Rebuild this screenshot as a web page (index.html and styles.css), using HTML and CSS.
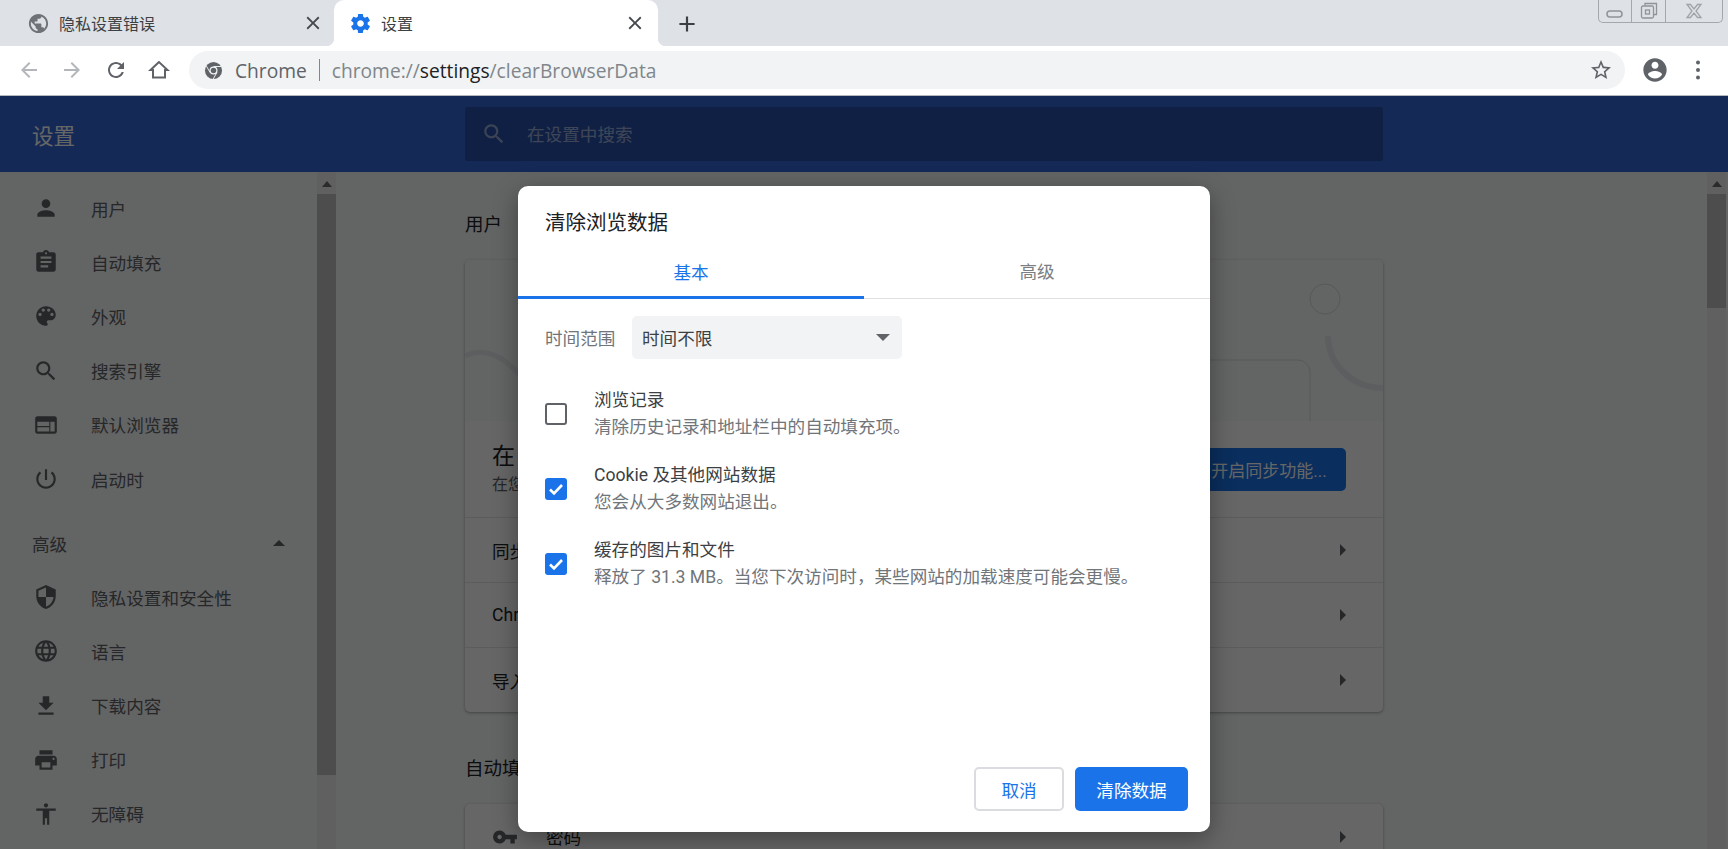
FILE: index.html
```html
<!DOCTYPE html>
<html lang="zh-CN">
<head>
<meta charset="utf-8">
<title>设置</title>
<link rel="stylesheet" href="styles.css">
</head>
<body>
<div class="tabstrip">
  <div class="tab">
    <svg class="tab-ico grey" viewBox="0 0 24 24"><path d="M12 2C6.48 2 2 6.48 2 12s4.48 10 10 10 10-4.48 10-10S17.52 2 12 2zm-1 17.93c-3.95-.49-7-3.85-7-7.93 0-.62.08-1.21.21-1.79L9 15v1c0 1.1.9 2 2 2v1.93zm6.9-2.54c-.26-.81-1-1.39-1.9-1.39h-1v-3c0-.55-.45-1-1-1H8v-2h2c.55 0 1-.45 1-1V7h2c1.1 0 2-.9 2-2v-.41c2.93 1.19 5 4.06 5 7.41 0 2.08-.8 3.97-2.1 5.39z"/></svg>
    <span class="tab-title">隐私设置错误</span>
    <svg class="tab-close" viewBox="0 0 24 24"><path d="M19 6.41L17.59 5 12 10.59 6.41 5 5 6.41 10.59 12 5 17.59 6.41 19 12 13.41 17.59 19 19 17.59 13.41 12z"/></svg>
  </div>
  <div class="tab tab-active">
    <svg class="tab-ico blue" viewBox="0 0 24 24"><path d="M19.43 12.98c.04-.32.07-.64.07-.98s-.03-.66-.07-.98l2.11-1.65c.19-.15.24-.42.12-.64l-2-3.46c-.12-.22-.39-.3-.61-.22l-2.49 1c-.52-.4-1.08-.73-1.69-.98l-.38-2.65C14.46 2.18 14.25 2 14 2h-4c-.25 0-.46.18-.49.42l-.38 2.65c-.61.25-1.17.59-1.69.98l-2.49-1c-.23-.09-.49 0-.61.22l-2 3.46c-.13.22-.07.49.12.64l2.11 1.65c-.04.32-.07.65-.07.98s.03.66.07.98l-2.11 1.65c-.19.15-.24.42-.12.64l2 3.46c.12.22.39.3.61.22l2.49-1c.52.4 1.08.73 1.69.98l.38 2.65c.03.24.24.42.49.42h4c.25 0 .46-.18.49-.42l.38-2.65c.61-.25 1.17-.59 1.69-.98l2.49 1c.23.09.49 0 .61-.22l2-3.46c.12-.22.07-.49-.12-.64l-2.11-1.65zM12 15.5c-1.93 0-3.5-1.57-3.5-3.5s1.57-3.5 3.5-3.5 3.5 1.57 3.5 3.5-1.57 3.5-3.5 3.5z"/></svg>
    <span class="tab-title">设置</span>
    <svg class="tab-close" viewBox="0 0 24 24"><path d="M19 6.41L17.59 5 12 10.59 6.41 5 5 6.41 10.59 12 5 17.59 6.41 19 12 13.41 17.59 19 19 17.59 13.41 12z"/></svg>
  </div>
  <svg class="newtab" viewBox="0 0 24 24"><path d="M19 13h-6v6h-2v-6H5v-2h6V5h2v6h6v2z"/></svg>
</div>
<div class="winctl">
  <div class="winbtn win-min"><svg viewBox="0 0 20 10" width="20" height="10"><rect x="2" y="2" width="15" height="6" rx="3" fill="none" stroke="#8f949a" stroke-width="1.5"/></svg></div>
  <div class="winbtn win-max"><svg viewBox="0 0 20 20" width="20" height="20"><path d="M6 4.5V2.5h11.500v11H14.500" fill="none" stroke="#8f949a" stroke-width="1.300"/><rect x="2.500" y="5" width="12" height="12" rx="1.500" fill="none" stroke="#8f949a" stroke-width="1.300"/><rect x="6.500" y="9" width="4" height="4" fill="none" stroke="#8f949a" stroke-width="1.300"/></svg></div>
  <div class="winbtn win-close"><svg viewBox="0 0 18 16" width="18" height="16"><path d="M2 1.500h3.500L9 6l3.500-4.500H16L11 8l5 6.500h-3.500L9 10l-3.500 4.500H2L7 8z" fill="none" stroke="#a0a4aa" stroke-width="1.300"/></svg></div>
</div>
<div class="toolbar">
  <div class="tb-btn"><svg class="tb-ico faint" viewBox="0 0 24 24"><path d="M20 11H7.830l5.590-5.590L12 4l-8 8 8 8 1.410-1.410L7.830 13H20v-2z"/></svg></div>
  <div class="tb-btn"><svg class="tb-ico faint" viewBox="0 0 24 24"><path d="M12 4l-1.410 1.410L16.170 11H4v2h12.170l-5.580 5.590L12 20l8-8z"/></svg></div>
  <div class="tb-btn"><svg class="tb-ico" viewBox="0 0 24 24"><path d="M17.650 6.350C16.200 4.900 14.210 4 12 4c-4.420 0-7.990 3.580-7.990 8s3.570 8 7.990 8c3.730 0 6.840-2.550 7.730-6h-2.080c-.82 2.330-3.040 4-5.650 4-3.310 0-6-2.690-6-6s2.690-6 6-6c1.660 0 3.140.69 4.220 1.780L13 11h7V4l-2.350 2.350z"/></svg></div>
  <div class="tb-btn"><svg class="tb-ico" viewBox="0 0 24 24"><path d="M12 4L3.500 12H6v7.500h12V12h2.500z" fill="none" stroke="#5f6368" stroke-width="2"/></svg></div>
  <div class="omnibox">
    <svg class="chrome-ico" viewBox="0 0 20 20"><circle cx="10" cy="10" r="9" fill="#5f6368"/><circle cx="10" cy="10" r="4.200" fill="#f1f3f4"/><circle cx="10" cy="10" r="2.900" fill="#5f6368"/><path d="M10 5.800h8M6.400 12.100L2.500 5.300M13.600 12.100L9.700 18.900" stroke="#f1f3f4" stroke-width="1"/></svg>
    <span class="omni-chrome">Chrome</span>
    <span class="omni-sep"></span>
    <span class="omni-url">chrome://<b class="omni-host">settings</b>/clearBrowserData</span>
    <svg class="omni-star" viewBox="0 0 24 24"><path d="M22 9.240l-7.190-.62L12 2 9.190 8.630 2 9.240l5.460 4.730L5.820 21 12 17.270 18.180 21l-1.630-7.030L22 9.240zM12 15.400l-3.760 2.270 1-4.280-3.320-2.880 4.380-.38L12 6.100l1.710 4.040 4.380.38-3.320 2.880 1 4.280L12 15.400z"/></svg>
  </div>
  <div class="tb-btn tb-account"><svg class="avatar" viewBox="0 0 24 24"><path d="M12 2C6.480 2 2 6.480 2 12s4.480 10 10 10 10-4.480 10-10S17.520 2 12 2zm0 3c1.660 0 3 1.340 3 3s-1.340 3-3 3-3-1.340-3-3 1.340-3 3-3zm0 14.200c-2.500 0-4.710-1.280-6-3.220.03-1.990 4-3.080 6-3.080 1.990 0 5.970 1.090 6 3.080-1.290 1.940-3.500 3.220-6 3.220z"/></svg></div>
  <div class="tb-btn"><svg class="tb-ico" viewBox="0 0 24 24"><circle cx="12" cy="4.500" r="2"/><circle cx="12" cy="12" r="2"/><circle cx="12" cy="19.500" r="2"/></svg></div>
</div>
<div class="app">
  <header class="app-header">
    <div class="app-title">设置</div>
    <div class="search">
      <svg class="search-ico" viewBox="0 0 24 24"><path d="M15.500 14h-.79l-.28-.27C15.410 12.590 16 11.110 16 9.500 16 5.910 13.090 3 9.500 3S3 5.910 3 9.500 5.910 16 9.500 16c1.610 0 3.090-.59 4.230-1.570l.27.28v.79l5 4.990L20.490 19l-4.990-5zm-6 0C7.010 14 5 11.990 5 9.500S7.010 5 9.500 5 14 7.010 14 9.500 11.990 14 9.500 14z"/></svg>
      <span class="search-ph">在设置中搜索</span>
    </div>
  </header>
  <div class="app-body">
    <nav class="sidebar">
      <div class="nav-item"><svg class="nav-ico" viewBox="0 0 24 24"><path d="M12 12c2.210 0 4-1.790 4-4s-1.790-4-4-4-4 1.790-4 4 1.790 4 4 4zm0 2c-2.670 0-8 1.340-8 4v2h16v-2c0-2.660-5.330-4-8-4z"/></svg><span>用户</span></div>
      <div class="nav-item"><svg class="nav-ico" viewBox="0 0 24 24"><path d="M19 3h-4.180C14.400 1.840 13.300 1 12 1c-1.300 0-2.400.84-2.820 2H5c-1.100 0-2 .9-2 2v14c0 1.100.9 2 2 2h14c1.100 0 2-.9 2-2V5c0-1.100-.9-2-2-2zm-7 0c.55 0 1 .45 1 1s-.45 1-1 1-1-.45-1-1 .45-1 1-1zm2 14H7v-2h7v2zm3-4H7v-2h10v2zm0-4H7V7h10v2z"/></svg><span>自动填充</span></div>
      <div class="nav-item"><svg class="nav-ico" viewBox="0 0 24 24"><path d="M12 3c-4.970 0-9 4.030-9 9s4.030 9 9 9c.83 0 1.500-.67 1.500-1.500 0-.39-.15-.74-.39-1.010-.23-.26-.38-.61-.38-.99 0-.83.67-1.500 1.500-1.500H16c2.760 0 5-2.240 5-5 0-4.420-4.030-8-9-8zm-5.500 9c-.83 0-1.500-.67-1.500-1.500S5.670 9 6.500 9 8 9.670 8 10.500 7.330 12 6.500 12zm3-4C8.670 8 8 7.330 8 6.500S8.670 5 9.500 5s1.500.67 1.500 1.500S10.330 8 9.500 8zm5 0c-.83 0-1.500-.67-1.500-1.500S13.670 5 14.500 5s1.500.67 1.500 1.500S15.330 8 14.500 8zm3 4c-.83 0-1.500-.67-1.500-1.500S16.670 9 17.500 9s1.500.67 1.500 1.500-.67 1.500-1.500 1.500z"/></svg><span>外观</span></div>
      <div class="nav-item"><svg class="nav-ico" viewBox="0 0 24 24"><path d="M15.500 14h-.79l-.28-.27C15.410 12.590 16 11.110 16 9.500 16 5.910 13.090 3 9.500 3S3 5.910 3 9.500 5.910 16 9.500 16c1.610 0 3.090-.59 4.230-1.570l.27.28v.79l5 4.990L20.490 19l-4.990-5zm-6 0C7.010 14 5 11.990 5 9.500S7.010 5 9.500 5 14 7.010 14 9.500 11.990 14 9.500 14z"/></svg><span>搜索引擎</span></div>
      <div class="nav-item"><svg class="nav-ico" viewBox="0 0 24 24"><path d="M20 4H4c-1.100 0-1.990.9-1.990 2L2 18c0 1.100.9 2 2 2h16c1.100 0 2-.9 2-2V6c0-1.100-.9-2-2-2zm-5 14H4v-4h11v4zm0-5H4V9h11v4zm5 5h-4V9h4v9z"/></svg><span>默认浏览器</span></div>
      <div class="nav-item"><svg class="nav-ico" viewBox="0 0 24 24"><path d="M13 3h-2v10h2V3zm4.830 2.170l-1.420 1.420C17.990 7.860 19 9.810 19 12c0 3.870-3.130 7-7 7s-7-3.130-7-7c0-2.190 1.010-4.140 2.580-5.420L6.170 5.170C4.230 6.820 3 9.260 3 12c0 4.970 4.030 9 9 9s9-4.030 9-9c0-2.740-1.230-5.180-3.170-6.830z"/></svg><span>启动时</span></div>
      <div class="nav-advanced"><span>高级</span><i class="tri-up nav-tri"></i></div>
      <div class="nav-item"><svg class="nav-ico" viewBox="0 0 24 24"><path d="M12 1L3 5v6c0 5.550 3.840 10.740 9 12 5.160-1.260 9-6.450 9-12V5l-9-4zm0 10.990h7c-.53 4.120-3.280 7.790-7 8.940V12H5V6.300l7-3.110v8.800z"/></svg><span>隐私设置和安全性</span></div>
      <div class="nav-item"><svg class="nav-ico" viewBox="0 0 24 24"><path d="M11.990 2C6.470 2 2 6.480 2 12s4.470 10 9.990 10C17.520 22 22 17.520 22 12S17.520 2 11.990 2zm6.930 6h-2.950c-.32-1.250-.78-2.450-1.380-3.560 1.840.63 3.370 1.910 4.330 3.560zM12 4.040c.83 1.200 1.480 2.530 1.910 3.960h-3.820c.43-1.430 1.080-2.760 1.910-3.960zM4.260 14C4.100 13.360 4 12.690 4 12s.1-1.360.26-2h3.380c-.08.66-.14 1.320-.14 2 0 .68.06 1.340.14 2H4.260zm.82 2h2.950c.32 1.250.78 2.450 1.380 3.560-1.840-.63-3.370-1.900-4.330-3.560zm2.950-8H5.080c.96-1.660 2.490-2.930 4.330-3.560C8.810 5.550 8.350 6.750 8.030 8zM12 19.960c-.83-1.200-1.480-2.530-1.910-3.960h3.820c-.43 1.430-1.080 2.760-1.910 3.960zM14.340 14H9.660c-.09-.66-.16-1.320-.16-2 0-.68.07-1.350.16-2h4.680c.09.65.16 1.320.16 2 0 .68-.07 1.340-.16 2zm.25 5.560c.6-1.110 1.060-2.310 1.380-3.560h2.950c-.96 1.650-2.490 2.930-4.330 3.560zM16.360 14c.08-.66.14-1.320.14-2 0-.68-.06-1.340-.14-2h3.380c.16.64.26 1.310.26 2s-.1 1.360-.26 2h-3.380z"/></svg><span>语言</span></div>
      <div class="nav-item"><svg class="nav-ico" viewBox="0 0 24 24"><path d="M19 9h-4V3H9v6H5l7 7 7-7zM5 18v2h14v-2H5z"/></svg><span>下载内容</span></div>
      <div class="nav-item"><svg class="nav-ico" viewBox="0 0 24 24"><path d="M19 8H5c-1.660 0-3 1.340-3 3v6h4v4h12v-4h4v-6c0-1.660-1.340-3-3-3zm-3 11H8v-5h8v5zm3-7c-.55 0-1-.45-1-1s.45-1 1-1 1 .45 1 1-.45 1-1 1zm-1-9H6v4h12V3z"/></svg><span>打印</span></div>
      <div class="nav-item"><svg class="nav-ico" viewBox="0 0 24 24"><path d="M12 2c1.100 0 2 .9 2 2s-.9 2-2 2-2-.9-2-2 .9-2 2-2zm9 7h-6v13h-2v-6h-2v6H9V9H3V7h18v2z"/></svg><span>无障碍</span></div>
    </nav>
    <div class="scrollbar"><i class="tri-up sb-tri"></i><div class="thumb thumb-nav"></div></div>
    <main class="main">
      <h2 class="sec-title">用户</h2>
      <section class="card">
        <svg class="hero" viewBox="0 0 918 161" width="918" height="161">
          <path d="M0 96C20 86 40 98 55 115" fill="none" stroke="#e8eaed" stroke-width="5"/>
          <circle cx="860" cy="39" r="15" fill="none" stroke="#dadce0" stroke-width="1"/>
          <path d="M863 76A55 52 0 0 0 918 128" fill="none" stroke="#e8eaed" stroke-width="6"/>
          <path d="M300 161V112a12 12 0 0 1 12-12H833a12 12 0 0 1 12 12V161" fill="none" stroke="#dadce0" stroke-width="1"/>
        </svg>
        <div class="signin">
          <div class="signin-text">
            <div class="signin-title">在</div>
            <div class="signin-sub">在您</div>
          </div>
          <div class="sync-btn">开启同步功能...</div>
        </div>
        <div class="row"><span>同步</span><i class="tri-right"></i></div>
        <div class="row"><span>Chrome</span><i class="tri-right"></i></div>
        <div class="row"><span>导入</span><i class="tri-right"></i></div>
      </section>
      <h2 class="sec-title sec-second">自动填充</h2>
      <section class="card">
        <div class="row row-icon">
          <svg class="row-ico" viewBox="0 0 24 24"><path d="M12.650 10C11.830 7.670 9.610 6 7 6c-3.310 0-6 2.690-6 6s2.690 6 6 6c2.610 0 4.830-1.670 5.650-4H17v4h4v-4h2v-4H12.650zM7 14c-1.100 0-2-.9-2-2s.9-2 2-2 2 .9 2 2-.9 2-2 2z"/></svg>
          <span>密码</span><i class="tri-right"></i>
        </div>
      </section>
    </main>
    <div class="scrollbar scrollbar-page"><i class="tri-up sb-tri"></i><div class="thumb thumb-page"></div></div>
  </div>
  <div class="barrier"></div>
</div>
<div class="dialog">
  <div class="dlg-title">清除浏览数据</div>
  <div class="dlg-tabs">
    <div class="dlg-tab dlg-tab-on">基本</div>
    <div class="dlg-tab">高级</div>
  </div>
  <div class="dlg-range">
    <span class="range-label">时间范围</span>
    <div class="select"><span>时间不限</span><i class="tri-down"></i></div>
  </div>
  <div class="opt">
    <span class="check"></span>
    <div class="opt-text"><div class="opt-name">浏览记录</div><div class="opt-desc">清除历史记录和地址栏中的自动填充项。</div></div>
  </div>
  <div class="opt">
    <span class="check check-on"><svg viewBox="0 0 22 22" width="22" height="22"><path d="M5 11.500l4 4 8-8.500" fill="none" stroke="#fff" stroke-width="2.600"/></svg></span>
    <div class="opt-text"><div class="opt-name">Cookie 及其他网站数据</div><div class="opt-desc">您会从大多数网站退出。</div></div>
  </div>
  <div class="opt">
    <span class="check check-on"><svg viewBox="0 0 22 22" width="22" height="22"><path d="M5 11.500l4 4 8-8.500" fill="none" stroke="#fff" stroke-width="2.600"/></svg></span>
    <div class="opt-text"><div class="opt-name">缓存的图片和文件</div><div class="opt-desc">释放了 31.3 MB。当您下次访问时，某些网站的加载速度可能会更慢。</div></div>
  </div>
  <div class="dlg-actions">
    <div class="btn btn-cancel">取消</div>
    <div class="btn btn-primary">清除数据</div>
  </div>
</div>
</body>
</html>
```
FILE: styles.css
```css
* { box-sizing: border-box; }
html, body { margin: 0; padding: 0; }
body {
  width: 1728px;
  height: 849px;
  overflow: hidden;
  position: relative;
  background: #fff;
  color: #202124;
  font-family: Roboto, "Noto Sans CJK SC", sans-serif;
  font-size: 17.6px;
}

/* Tab strip */
.tabstrip { height: 46px; background: #dee1e6; display: flex; align-items: stretch; }
.tab { width: 334px; display: flex; align-items: center; padding: 0 10px 0 27px; position: relative; }
.tab-active { width: 324px; background: #fff; border-radius: 10px 10px 0 0; padding: 0 12px 0 15px; }
.tab-active::before, .tab-active::after { content: ""; position: absolute; bottom: 0; width: 8px; height: 8px; }
.tab-active::before { left: -8px; background: radial-gradient(circle at 0 0, transparent 8px, #fff 8.5px); }
.tab-active::after { right: -8px; background: radial-gradient(circle at 100% 0, transparent 8px, #fff 8.5px); }
.tab-ico { width: 23px; height: 23px; flex: none; margin-right: 9px; }
.tab-ico.grey { fill: #6f7377; }
.tab-ico.blue { fill: #1a73e8; }
.tab-title { flex: 1; font-size: 16px; color: #3c4043; white-space: nowrap; }
.tab-close { width: 22px; height: 22px; fill: #45484c; flex: none; }
.newtab { width: 26px; height: 26px; fill: #3c4043; margin: 11px 0 0 16px; }

/* Window controls */
.winctl {
  position: absolute; top: 0; left: 1598px; width: 125px; height: 23px;
  display: flex; border: 1.500px solid #a3a8ae; border-top: 0; border-radius: 0 0 5px 5px;
}
.winbtn { display: flex; align-items: center; justify-content: center; }
.win-min { width: 33px; border-right: 1px solid #a3a8ae; padding-top: 5px; }
.win-max { width: 34px; border-right: 1px solid #a3a8ae; }
.win-close { flex: 1; }

/* Toolbar */
.toolbar { height: 50px; background: #fff; border-bottom: 1px solid #b4b7bc; display: flex; align-items: center; padding: 0 0 1px 7px; }
.tb-btn { width: 43.500px; height: 38px; flex: none; display: flex; align-items: center; justify-content: center; }
.tb-ico { width: 24px; height: 24px; fill: #5f6368; }
.tb-ico.faint { fill: #b3b6ba; }
.omnibox {
  width: 1436px; height: 38px; margin-left: 8px; border-radius: 19px; background: #f1f3f4;
  display: flex; align-items: center; padding: 0 12px 0 15px; flex: none;
}
.tb-account { margin-left: 8px; }
.chrome-ico { width: 19px; height: 19px; flex: none; }
.omni-chrome { font-family: "Open Sans", sans-serif; font-size: 19.200px; color: #5f6368; margin-left: 12px; }
.omni-sep { width: 1px; height: 22px; background: #80868b; margin: 0 12px; }
.omni-url { font-family: "Open Sans", sans-serif; font-size: 19.200px; color: #80868b; flex: 1; white-space: nowrap; }
.omni-host { font-weight: 400; color: #202124; }
.omni-star { width: 24px; height: 24px; fill: #5f6368; flex: none; }
.avatar { width: 28px; height: 28px; fill: #5f6368; }

/* Settings app */
.app { position: relative; height: 753px; background: #f8f9fa; overflow: hidden; }
.app-header { height: 76px; background: #3367d6; position: relative; display: flex; align-items: center; }
.app-title { width: 465px; padding-left: 32px; font-size: 21.500px; color: #fff; }
.search { width: 918px; height: 54px; border-radius: 2px; background: rgba(0,0,0,.2); display: flex; align-items: center; padding-left: 16px; }
.search-ico { width: 26px; height: 26px; fill: rgba(255,255,255,.5); }
.search-ph { font-size: 17.600px; color: rgba(255,255,255,.55); margin: 0 0 2px 20px; }
.app-body { display: flex; height: 677px; }

.sidebar { width: 317px; flex: none; padding-top: 9px; }
.nav-item { height: 54.200px; display: flex; align-items: center; padding-left: 33px; color: #5f6368; fill: #5f6368; }
.nav-ico { width: 26px; height: 26px; margin-right: 32px; flex: none; }
.nav-advanced { height: 54px; margin-top: 10px; display: flex; align-items: center; justify-content: space-between; padding: 0 32px 0 32px; color: #5f6368; }

.tri-up { display: block; width: 0; height: 0; border: 5px solid transparent; border-top: 0; }
.nav-tri { border-bottom: 6px solid #5f6368; border-left-width: 6px; border-right-width: 6px; }
.sb-tri { border-bottom: 6px solid #6d6d6d; border-left-width: 5px; border-right-width: 5px; margin: 9px auto 7px; }

.scrollbar { width: 19px; flex: none; background: #f1f1f1; }
.scrollbar-page { margin-right: 2px; }
.thumb { background: #c1c1c1; }
.thumb-nav { height: 581px; }
.thumb-page { height: 114px; }

.main { flex: 1; padding: 0 0 0 129px; overflow: hidden; }
.sec-title { margin: 0; height: 88px; padding-top: 40px; font-size: 18.500px; font-weight: 400; line-height: 26px; color: #202124; }
.sec-second { height: 92px; padding-top: 44px; }
.card { width: 918px; background: #fff; border-radius: 5px; box-shadow: 0 1px 3px rgba(60,64,67,.45); }
.hero { display: block; background: #f8f9fa; border-radius: 5px 5px 0 0; }
.signin { height: 96px; display: flex; align-items: center; justify-content: space-between; padding: 0 37px 0 27px; }
.signin-title { font-size: 23px; line-height: 32px; }
.signin-sub { font-size: 16px; line-height: 24px; color: #5f6368; }
.sync-btn { width: 150px; height: 43px; background: #1a73e8; color: #fff; border-radius: 5px; display: flex; align-items: center; justify-content: center; font-size: 17px; padding-right: 4px; }
.row { height: 65px; border-top: 1px solid #e3e5e8; padding: 0 37px 0 27px; display: flex; align-items: center; justify-content: space-between; }
.row-icon { border-top: 0; }
.row-ico { width: 26px; height: 26px; fill: #5f6368; flex: none; margin-right: 28px; }
.row-icon span { flex: 1; }
.tri-right { display: block; width: 0; height: 0; border-left: 6px solid #5f6368; border-top: 6px solid transparent; border-bottom: 6px solid transparent; }

.barrier { position: absolute; inset: 0; background: rgba(0,0,0,.6); }

/* Dialog */
.dialog {
  position: absolute; left: 518px; top: 186px; width: 692px; height: 646px;
  background: #fff; border-radius: 10px; box-shadow: 0 7px 24px rgba(0,0,0,.35); display: flex; flex-direction: column;
}
.dlg-title { height: 55px; padding: 21px 27px 0; font-size: 20.500px; line-height: 32px; color: #202124; }
.dlg-tabs { height: 58px; display: flex; border-bottom: 1px solid #dfe1e4; }
.dlg-tab { width: 346px; display: flex; align-items: center; justify-content: center; color: #7b7f84; padding-top: 2px; }
.dlg-tab-on { color: #1a73e8; border-bottom: 3px solid #1a73e8; height: 58px; padding-top: 5px; }
.dlg-range { display: flex; align-items: center; padding: 17px 0 0 27px; margin-bottom: 17px; }
.range-label { width: 87px; color: #70757a; }
.select { width: 270px; height: 43px; border-radius: 5px; background: #f1f3f4; display: flex; align-items: center; justify-content: space-between; padding: 0 12px 0 10px; color: #3c4043; }
.tri-down { display: block; width: 0; height: 0; border-top: 7px solid #5f6368; border-left: 7px solid transparent; border-right: 7px solid transparent; }
.opt { height: 75px; display: flex; align-items: center; padding-left: 27px; }
.check { width: 22px; height: 22px; border: 2.500px solid #5f6368; border-radius: 3px; flex: none; margin-right: 27px; display: block; }
.check-on { border: 0; background: #1a73e8; }
.check-on svg { display: block; }
.opt-name { font-size: 17.600px; line-height: 27px; color: #3c4043; white-space: nowrap; }
.opt-desc { font-size: 17.600px; line-height: 27px; color: #70757a; white-space: nowrap; }
.dlg-actions { margin-top: auto; display: flex; justify-content: flex-end; gap: 11px; padding: 0 22px 21px 0; }
.btn { height: 44px; border-radius: 5px; display: flex; align-items: center; justify-content: center; font-size: 17.600px; }
.btn-cancel { width: 90px; border: 2px solid #dadce0; color: #1a73e8; background: #fff; }
.btn-primary { width: 113px; background: #1a73e8; color: #fff; }
```
